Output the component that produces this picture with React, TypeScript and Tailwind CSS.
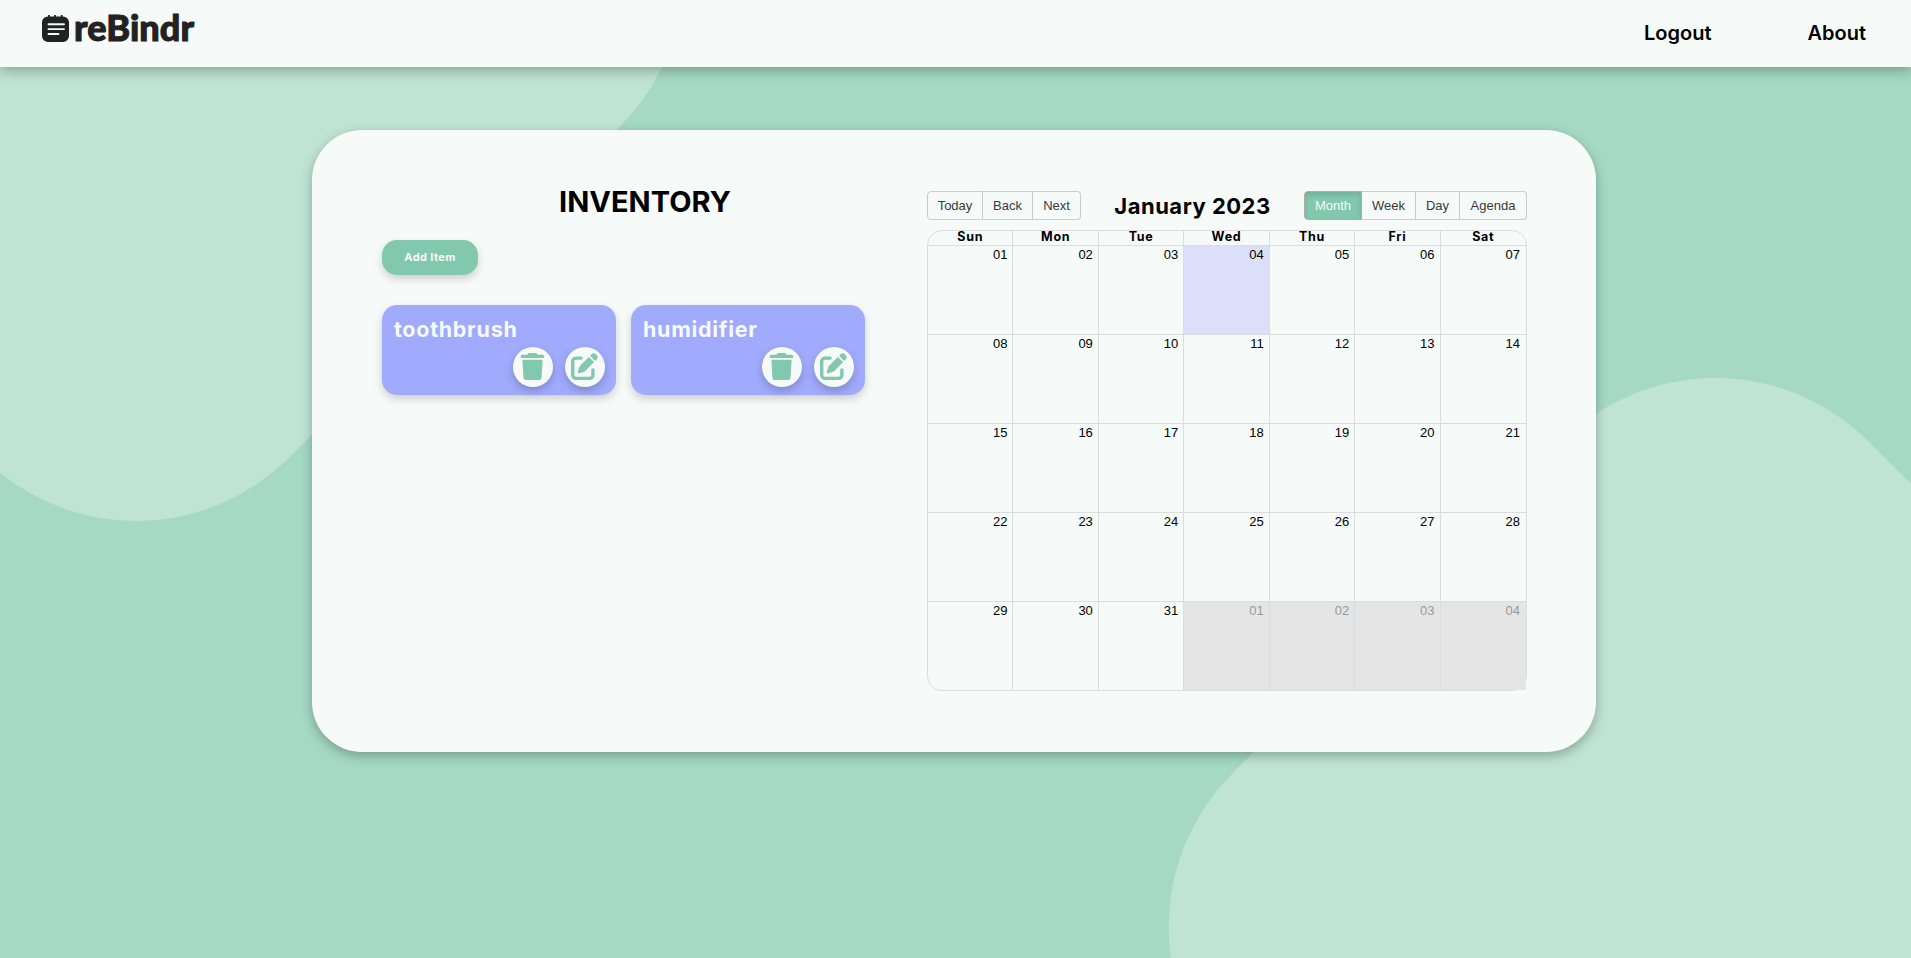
import { FaTrash, FaPenToSquare } from "react-icons/fa6";

const weekdays = ["Sun", "Mon", "Tue", "Wed", "Thu", "Fri", "Sat"];
const pad = (n: number) => String(n).padStart(2, "0");
const weeks = Array.from({ length: 5 }, (_, w) =>
  Array.from({ length: 7 }, (_, d) => {
    const n = w * 7 + d + 1;
    return { label: pad(n > 31 ? n - 31 : n), off: n > 31, today: n === 4 };
  })
);

function Backdrop() {
  return (
    <svg className="absolute inset-0 -z-10" width="1911" height="958" viewBox="0 0 1911 958" fill="#bfe4d6">
      <path d="M0 472.500A216 216 0 0 0 289 457.500L614 132A216 216 0 0 0 662 67V0H0Z" />
      <path d="M1171 958A216 216 0 0 1 1231 775L1562 442A216 216 0 0 1 1868 441L1911 484V958Z" />
    </svg>
  );
}

function Logo() {
  return (
    <a className="flex items-start text-[#222]">
      <svg className="mt-[15px]" width="27" height="27" viewBox="0 0 27 27">
        <path
          fill="#222"
          d="M6 1.4V.6a.9.9 0 0 1 1.8 0v.8h4.2V.6a.9.9 0 0 1 1.8 0v.8h5V.6a.9.9 0 0 1 1.8 0v.8A6 6 0 0 1 27 7.200V21a6 6 0 0 1-6 6H6a6 6 0 0 1-6-6V7.200A6 6 0 0 1 6 1.400Z"
        />
        <path stroke="#f6faf9" strokeWidth="1.9" strokeLinecap="round" d="M6.500 9.200H22M6.500 14.100H22M6.500 19H16.500" />
      </svg>
      <span className="ml-[5px] mt-[5px] font-[Lato,sans-serif] text-[36px] leading-[44px] font-black tracking-[0.1px] [-webkit-text-stroke:1px_#222]">
        reBindr
      </span>
    </a>
  );
}

function ItemCard({ name }: { name: string }) {
  return (
    <div className="flex h-[90px] w-[234px] flex-col rounded-[15px] bg-[#a0abfd] shadow-[0_4px_8px_rgba(0,0,0,0.17)]">
      <h3 className="mt-[9px] ml-[12px] text-[21.5px] leading-[30px] font-bold tracking-[0.7px] text-[#f6faf9]">{name}</h3>
      <div className="mt-[3px] mr-[11px] flex justify-end gap-3 text-[#82c8af]">
        <button className="grid size-10 place-items-center rounded-full bg-[#f6faf9] shadow-[0_4px_8px_rgba(0,0,0,0.2)]">
          <FaTrash size={27} className="-mt-[2px] -ml-px" />
        </button>
        <button className="grid size-10 place-items-center rounded-full bg-[#f6faf9] shadow-[0_4px_8px_rgba(0,0,0,0.2)]">
          <FaPenToSquare size={27} className="-mt-[2px] -ml-px" />
        </button>
      </div>
    </div>
  );
}

function Calendar() {
  const btn = "h-[29px] border-y border-r border-[#ccc] text-center";
  return (
    <section className="mt-[61px] w-[600px]">
      <div className="flex h-[29px] items-center justify-between font-['Liberation_Sans',Arial,sans-serif] text-[13px] text-[#373a3c]">
        <div className="flex">
          <button className={`${btn} w-[56px] rounded-l-[4px] border-l`}>Today</button>
          <button className={`${btn} w-[50px]`}>Back</button>
          <button className={`${btn} w-[48px] rounded-r-[4px]`}>Next</button>
        </div>
        <h2 className="mt-[2px] font-[Inter,sans-serif] text-[22px] leading-[29px] font-bold tracking-[0.5px] whitespace-nowrap text-black">January 2023</h2>
        <div className="flex">
          <button className="h-[29px] w-[58px] rounded-l-[4px] border border-[#adadad] bg-[#82c8af] text-center text-[#f6faf9] shadow-[inset_0_3px_5px_rgba(0,0,0,0.125)]">
            Month
          </button>
          <button className={`${btn} w-[54px]`}>Week</button>
          <button className={`${btn} w-[44px]`}>Day</button>
          <button className={`${btn} w-[67px] rounded-r-[4px]`}>Agenda</button>
        </div>
      </div>
      <div className="mt-[10px] rounded-[15px] border border-[#ddd]">
        <div className="grid h-[14px] grid-cols-7">
          {weekdays.map((d, i) => (
            <div key={d} className={`text-center text-[12.5px] leading-[12px] font-bold tracking-[0.7px] ${i < 6 ? "border-r border-[#ddd]" : ""}`}>
              {d}
            </div>
          ))}
        </div>
        {weeks.map((week, w) => (
          <div key={w} className="grid h-[89px] grid-cols-7 border-t border-[#ddd]">
            {week.map((day, i) => (
              <div
                key={i}
                className={`pt-[2px] text-right font-['Liberation_Sans',Arial,sans-serif] text-[13px] leading-[14px] ${
                  i < 6 ? "border-r border-[#ddd] pr-[5px]" : "pr-[6px]"
                } ${day.off ? "bg-[#e5e5e5] text-[#999]" : day.today ? "bg-[#dbdff9] text-black" : "text-black"}`}
              >
                {day.label}
              </div>
            ))}
          </div>
        ))}
      </div>
    </section>
  );
}

export default function App() {
  return (
    <div className="relative isolate h-[958px] w-[1911px] overflow-hidden bg-[#a5d9c5] font-[Inter,sans-serif]">
      <Backdrop />
      <header className="flex h-[67px] justify-between bg-[#f6faf9] pr-[45px] pl-[42px] shadow-[0_4px_12px_rgba(0,0,0,0.28)]">
        <Logo />
        <nav className="flex h-[66px] items-center gap-[96px] text-[20px] font-semibold text-black">
          <a>Logout</a>
          <a>About</a>
        </nav>
      </header>
      <main className="mt-[63px] ml-[312px] flex h-[622px] w-[1284px] rounded-[50px] bg-[#f6faf9] pl-[70px] shadow-[0_4px_12px_rgba(0,0,0,0.28)]">
        <section className="w-[526px]">
          <h1 className="mt-[52px] text-center text-[29px] leading-[40px] font-bold">INVENTORY</h1>
          <button className="mt-[18px] block h-[35px] w-[96px] rounded-[15px] bg-[#82c8af] text-[11px] font-bold tracking-[0.4px] text-[#f6faf9] shadow-[0_4px_8px_rgba(0,0,0,0.17)]">
            Add Item
          </button>
          <div className="mt-[30px] flex gap-[15px]">
            <ItemCard name="toothbrush" />
            <ItemCard name="humidifier" />
          </div>
        </section>
        <div className="ml-[19px]">
          <Calendar />
        </div>
      </main>
    </div>
  );
}
